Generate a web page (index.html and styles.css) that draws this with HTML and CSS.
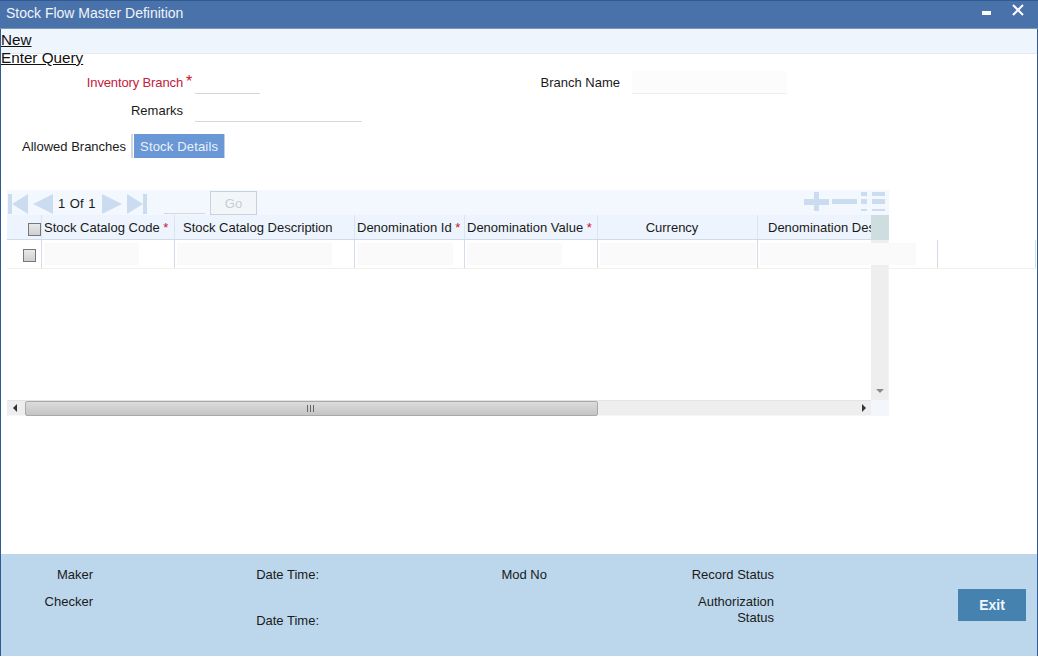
FILE: index.html
```html
<!DOCTYPE html>
<html lang="en">
<head>
<meta charset="utf-8">
<title>Stock Flow Master Definition</title>
<link rel="stylesheet" href="styles.css">
</head>
<body>
<div class="window">
  <header class="titlebar">
    <span class="title">Stock Flow Master Definition</span>
    <span class="win-controls">
      <svg class="icon-min" width="9" height="4" viewBox="0 0 9 4"><rect width="9" height="4" fill="#fff"/></svg>
      <svg class="icon-close" width="12" height="12" viewBox="0 0 12 12"><path d="M1 1L11 11M11 1L1 11" stroke="#fff" stroke-width="2" fill="none"/></svg>
    </span>
  </header>
  <nav class="menu">
    <a class="menu-link">New</a>
    <a class="menu-link">Enter Query</a>
  </nav>
  <section class="form">
    <div class="form-row first">
      <label class="label req-label">Inventory Branch</label><span class="star big">*</span>
      <span class="field short"></span>
      <label class="label name-label">Branch Name</label>
      <span class="field name"></span>
    </div>
    <div class="form-row second">
      <label class="label">Remarks</label>
      <span class="field long"></span>
    </div>
  </section>
  <div class="tabs">
    <span class="tab">Allowed Branches</span>
    <span class="tab active">Stock Details</span>
  </div>
  <section class="grid">
    <div class="pager">
      <svg class="pg" width="46" height="20" viewBox="0 0 46 20" fill="#cbdcf1">
        <rect x="0" y="0" width="4" height="20"/><path d="M20 0V20L4 10Z"/>
        <path d="M45 0V20L25 10Z"/>
      </svg>
      <span class="pg-text">1 Of 1</span>
      <svg class="pg" width="46" height="20" viewBox="0 0 46 20" fill="#cbdcf1">
        <path d="M0 0V20L20 10Z"/>
        <path d="M25 0V20L41 10Z"/><rect x="41" y="0" width="4" height="20"/>
      </svg>
      <span class="pg-input"></span>
      <span class="go">Go</span>
      <svg class="pg-tools" width="81" height="19" viewBox="0 0 81 19" fill="#cbdcf1">
        <rect x="0" y="7" width="25" height="6"/><rect x="10" y="0" width="5" height="19"/>
        <rect x="28" y="7" width="25" height="5"/>
        <rect x="57" y="0" width="6" height="4"/><rect x="68" y="0" width="13" height="4"/>
        <rect x="57" y="7" width="6" height="5"/><rect x="68" y="7" width="13" height="5"/>
        <rect x="57" y="17" width="6" height="2"/><rect x="68" y="17" width="13" height="2"/>
      </svg>
    </div>
    <div class="viewport">
      <div class="thead">
        <div class="th c0"><span class="check head"></span></div>
        <div class="th c1">Stock Catalog Code <b class="star">*</b></div>
        <div class="th c2">Stock Catalog Description</div>
        <div class="th c3">Denomination Id <b class="star">*</b></div>
        <div class="th c4">Denomination Value <b class="star">*</b></div>
        <div class="th c5 center">Currency</div>
        <div class="th c6 last">Denomination Des</div>
      </div>
      <div class="vcorner"></div>
      <div class="vtrack"><span class="arrow-down"></span></div>
      <div class="tbody">
        <div class="td c0"><span class="check"></span></div>
        <div class="td c1"><span class="cell w95"></span></div>
        <div class="td c2"><span class="cell w155"></span></div>
        <div class="td c3"><span class="cell w96"></span></div>
        <div class="td c4"><span class="cell w95"></span></div>
        <div class="td c5"><span class="cell w156"></span></div>
        <div class="td c6"><span class="cell w156"></span></div>
        <div class="td c7"></div>
      </div>
    </div>
    <div class="hscroll">
      <div class="htrack">
        <span class="arrow-left"></span>
        <span class="hthumb"><span class="grip"></span></span>
        <span class="arrow-right"></span>
      </div>
    </div>
  </section>
  <footer class="audit">
    <div class="audit-col col-a">
      <span class="aud">Maker</span>
      <span class="aud">Checker</span>
    </div>
    <div class="audit-col col-b">
      <span class="aud">Date Time:</span>
      <span class="aud lower">Date Time:</span>
    </div>
    <div class="audit-col col-c">
      <span class="aud">Mod No</span>
    </div>
    <div class="audit-col col-d">
      <span class="aud">Record Status</span>
      <span class="aud wrap">Authorization<br>Status</span>
    </div>
    <button class="exit" type="button">Exit</button>
  </footer>
</div>
</body>
</html>
```
FILE: styles.css
```css
* { box-sizing: border-box; }
html, body { margin: 0; padding: 0; background: #fff; }
body { font-family: "Liberation Sans", Arial, sans-serif; font-size: 13px; color: #1a1a1a; overflow: hidden; }
.window {
  width: 1038px; height: 656px;
  display: flex; flex-direction: column;
  border-left: 1px solid #2f5a94; border-right: 1px solid #2f5a94;
}
.titlebar {
  height: 29px; flex: none;
  background: #4a72aa;
  border-top: 1px solid #2f5a94;
  border-bottom: 1px solid #7d99b2;
  margin: 0 -1px;
  display: flex; align-items: center; justify-content: space-between;
  padding: 0 14px 0 6px;
  color: #fff;
}
.title { font-size: 14px; position: relative; top: -2px; color: #f0f4fa; }
.win-controls { display: flex; align-items: flex-start; gap: 21px; height: 27px; }
.icon-min { margin-top: 10px; }
.icon-close { margin-top: 3px; }
.menu { height: 25px; flex: none; background: #eef5fd; border-bottom: 1px solid #e6e9ee; display: flex; flex-direction: column; align-items: flex-start; padding-top: 2px; }
.menu-link { font-size: 15.25px; line-height: 18px; color: #111; text-decoration: underline; flex: none; }
.form { height: 70px; flex: none; padding-top: 14px; }
.form-row { display: flex; align-items: flex-start; }
.form-row.first { height: 28px; }
.label { width: 182px; text-align: right; line-height: 16px; margin-top: 7px; }
.req-label { color: #c4203c; letter-spacing: -0.13px; }
.star { color: #d0102c; font-weight: normal; }
.star.big { width: 12px; text-align: center; font-size: 16px; line-height: 16px; margin-top: 6px; }
.field { display: block; border-bottom: 1px solid #d8d8d8; height: 26px; }
.field.short { width: 65px; }
.field.long { width: 167px; margin-left: 12px; }
.name-label { width: 360px; }
.field.name { width: 155px; height: 23px; margin: 3px 0 0 12px; background: #fcfcfc; border-bottom-color: #eee; }
.tabs { flex: none; height: 26px; display: flex; margin-left: 21px; margin-top: 10px; }
.tab { line-height: 26px; height: 24px; padding-right: 5px; border-right: 2px solid #d5d9df; }
.tab.active { background: #6a97d6; color: #eaf1fb; padding: 0 6px; border-right: 1px solid #c0cfe2; border-left: 1px solid #fff; letter-spacing: 0.17px; }
.grid { flex: none; margin: 30px 0 0 6px; width: 882px; }
.pager { height: 25px; background: #f3f8fe; display: flex; align-items: flex-start; }
.pg { flex: none; margin-top: 4px; }
.pager > .pg:first-child { margin-left: 1px; }
.pg-text { width: 48px; padding-left: 4px; line-height: 28px; white-space: nowrap; word-spacing: 1px; }
.pg-input { width: 41px; height: 24px; border-bottom: 1px solid #d8d8d8; margin-left: 16px; }
.go { width: 47px; height: 24px; margin: 1px 0 0 5px; border: 1px solid #c8d1dc; background: #f3f6f9; color: #c6cdd6; text-align: center; line-height: 23px; }
.pg-tools { margin: 2px 4px 0 auto; flex: none; }
.viewport { height: 185px; position: relative; background: #fff; }
.thead { height: 25px; width: 864px; overflow: hidden; display: flex; background: #edf4fd; border-bottom: 1px solid #cfdbe9; }
.th { flex: none; height: 24px; line-height: 26px; border-right: 1px solid #d9e4f0; white-space: nowrap; padding-left: 2px; }
.th.c0 { padding: 0; }
.th.c2 { padding-left: 8px; }
.th.center { text-align: center; padding: 0 11px 0 0; }
.th.c6 { padding-left: 10px; border-right: 0; }
.c0 { width: 35px; }
.c1 { width: 133px; }
.c2 { width: 180px; }
.c3 { width: 110px; }
.c4 { width: 133px; }
.c5 { width: 160px; }
.c6 { width: 180px; }
.c7 { width: 98px; }
.check { display: block; width: 13px; height: 13px; border: 1px solid #777; background: linear-gradient(#e9e9e9, #cfcfcf); margin: 9px 0 0 16px; }
.check.head { margin: 8px 0 0 21px; }
.vcorner { position: absolute; left: 864px; top: 0; width: 18px; height: 25px; background: #cddde0; }
.vtrack { position: absolute; left: 864px; top: 25px; width: 18px; height: 160px; background: #eeeeee; border-right: 1px solid #f3f3f3; }
.arrow-down { position: absolute; left: 5px; bottom: 7px; width: 0; height: 0; border: 4px solid transparent; border-top: 4px solid #8a8a8a; border-bottom: 0; }
.tbody { position: absolute; left: 0; top: 25px; width: 1029px; height: 29px; display: flex; border-bottom: 1px solid #f6efe9; }
.td { flex: none; height: 28px; border-right: 1px solid #d3dde9; padding-top: 3px; }
.td.c0 { padding-top: 0; }
.td.c1, .td.c2, .td.c3, .td.c4, .td.c5, .td.c6 { padding-left: 2px; }
.cell { display: block; height: 22px; background: #fafafa; }
.w95 { width: 95px; }
.w155 { width: 155px; }
.w96 { width: 96px; }
.w156 { width: 156px; }
.hscroll { height: 16px; background: #f3f7fc; }
.htrack { width: 864px; height: 15px; background: #eeeeee; position: relative; border-top: 1px solid #e4e4e4; }
.hthumb { display: block; position: absolute; left: 18px; top: 0; width: 573px; height: 15px; border: 1px solid #a9a9a9; border-radius: 2px; background: linear-gradient(#dcdcdc, #c4c4c4); }
.grip { position: absolute; left: 281px; top: 3px; width: 8px; height: 7px; background: repeating-linear-gradient(90deg, #666 0 1px, transparent 1px 3px); }
.arrow-left { position: absolute; left: 6px; top: 3px; width: 0; height: 0; border: 4px solid transparent; border-right: 4px solid #333; border-left: 0; }
.arrow-right { position: absolute; left: 855px; top: 3px; width: 0; height: 0; border: 4px solid transparent; border-left: 4px solid #333; border-right: 0; }
.audit { margin-top: auto; height: 102px; flex: none; background: #bcd7ec; display: flex; align-items: flex-start; padding-top: 13px; }
.audit-col { display: flex; flex-direction: column; align-items: flex-end; flex: none; text-align: right; }
.aud { display: block; line-height: 16px; }
.col-a { width: 92px; gap: 11px; }
.col-b { width: 226px; gap: 30px; }
.col-c { width: 228px; }
.col-d { width: 227px; gap: 11px; }
.exit { margin: 22px 11px 0 auto; width: 68px; height: 32px; border: 0; background: #4682b0; color: #eef6fd; font: bold 14px "Liberation Sans", Arial, sans-serif; }
```
